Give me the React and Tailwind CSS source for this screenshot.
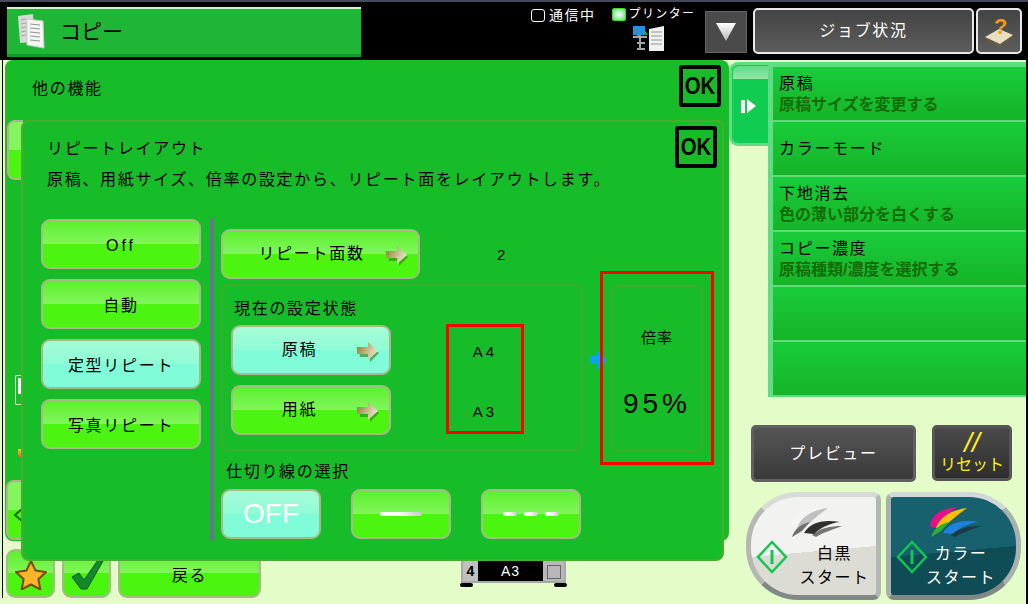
const FONT = { fontFamily: '"Liberation Sans", "Noto Sans CJK JP", sans-serif' };

// アイコン類
function Arrow() {
  return (
    <svg width="24" height="22" viewBox="0 0 24 22" className="mt-[3px] shrink-0">
      <defs>
        <linearGradient id="ar" x1="0" y1="0" x2="1" y2="0.4">
          <stop offset="0" stopColor="#8f7c2c" />
          <stop offset="1" stopColor="#e8e2c8" />
        </linearGradient>
      </defs>
      <path d="M2 8h10V3l10 8-9 9v-5H3z" fill="#2f7a10" opacity="0.6" transform="translate(1 1)" />
      <path d="M1 6h11V1l10 9-10 9v-6H1z" fill="url(#ar)" />
    </svg>
  );
}

function GreenButton({ active, className = "", children }) {
  const bg = active
    ? "bg-[linear-gradient(#a6fcd8_0,#8ffcd5_50%,#80fcd8_50%,#80fcd8_100%)]"
    : "bg-[linear-gradient(#5cf02c_0,#82f65c_50%,#4cf510_50%,#4cf510_100%)]";
  return (
    <div
      className={`flex items-center justify-center rounded-[9px] border-2 border-[#a8b888] text-black ${bg} ${className}`}
    >
      {children}
    </div>
  );
}

function OkBox({ className = "" }) {
  return (
    <div
      className={`flex h-[42px] w-[42px] items-center justify-center rounded-[3px] border-[4px] border-black text-[24px] font-bold text-black ${className}`}
    >
      <span className="inline-block scale-x-[0.85]">OK</span>
    </div>
  );
}

function Separator({ dashed }) {
  const bar = "h-[4px] rounded-[2px] bg-[linear-gradient(90deg,#fff_40%,#c8c8c8)]";
  if (dashed) {
    return (
      <div className="flex gap-[7px]">
        <div className={`w-[14px] ${bar}`} />
        <div className={`w-[14px] ${bar}`} />
        <div className={`w-[14px] ${bar}`} />
      </div>
    );
  }
  return <div className={`w-[42px] ${bar}`} />;
}

function Header() {
  return (
    <div className="flex h-[60px] shrink-0 border-t-[2px] border-[#454a58] bg-black">
      <div className="ml-[7px] mt-[5px] flex h-[50px] w-[354px] items-center border-t-[2px] border-b-[3px] border-t-[#cdf5d0] border-b-[#149a2c] bg-[#1fb535] pl-[10px]">
        <svg width="30" height="38" viewBox="0 0 30 38">
          <path d="M1 3l15-2 2 28-15 1z" fill="#d6d8d4" />
          <path d="M10 6l16 2 1 27-17-3z" fill="#f4f6f4" stroke="#c8ccc8" />
          <path d="M13 11l10 1M13 15l10 1M13 19l10 1M13 23l10 1M13 27l10 1" stroke="#909890" />
          <path d="M4 7l5-1M4 11l5-1M4 15l5-1M4 19l5-1M4 23l5-1" stroke="#a0a8a0" />
        </svg>
        <span className="ml-[13px] text-[21px] text-black">コピー</span>
      </div>
      <div className="ml-[170px] flex w-[174px] pt-[5px] text-white">
        <div className="flex h-[16px] items-center">
          <div className="h-[13px] w-[14px] rounded-[3px] border border-white" />
          <span className="ml-[4px] text-[14px] tracking-[1.5px]">通信中</span>
        </div>
        <div className="ml-[16px] flex flex-col">
          <div className="flex h-[14px] items-center">
            <div className="h-[13px] w-[14px] rounded-[2px] border border-[#40e020] bg-[radial-gradient(#fff,#50e060)]" />
            <span className="ml-[3px] whitespace-nowrap text-[12px] leading-none tracking-[1.4px]">プリンター</span>
          </div>
          <svg width="34" height="28" viewBox="0 0 34 28" className="ml-[20px] mt-[3px]">
            <rect x="1" y="2" width="12" height="9" fill="#2090e8" />
            <rect x="5" y="11" width="4" height="2" fill="#808890" />
            <path d="M1 13h14M8 13v12M5 19h8M5 25h8" stroke="#a0a8a8" strokeWidth="2" />
            <path d="M12 7l3 4" stroke="#20c040" strokeWidth="2" />
            <path d="M17 5l15-3v25H17z" fill="#f0f2f0" />
            <path d="M19 8h11M19 12h11M19 16h11M19 20h11" stroke="#909898" />
          </svg>
        </div>
      </div>
      <div className="mt-[9px] flex h-[42px] w-[42px] items-center justify-center border border-[#666] bg-[#4a4a4a]">
        <svg width="22" height="20" viewBox="0 0 22 20">
          <defs>
            <linearGradient id="tri" x1="0" y1="0" x2="0" y2="1">
              <stop offset="0" stopColor="#fff" />
              <stop offset="1" stopColor="#b8b8b8" />
            </linearGradient>
          </defs>
          <path d="M1 1h20L11 19z" fill="url(#tri)" />
        </svg>
      </div>
      <div className="ml-[6px] mt-[6px] flex h-[46px] w-[221px] items-center justify-center rounded-[5px] border-2 border-[#e8e8e8] bg-[linear-gradient(#444,#5c5c5c)] text-[16px] tracking-[1.7px] text-white">
        ジョブ状況
      </div>
      <div className="ml-[2px] mt-[6px] flex h-[46px] w-[46px] items-center justify-center rounded-[5px] border-2 border-[#e8e8e8] bg-[linear-gradient(#444,#5c5c5c)]">
        <svg width="32" height="32" viewBox="0 0 32 32">
          <path d="M3 23l14 7 13-10v2L17 32 3 25z" fill="#6a5c3a" />
          <path d="M2 22l14-8 14 6-13 9z" fill="#e8dfc0" />
          <text x="11" y="19" fontSize="22" fontWeight="700" fill="#f09a18" fontFamily="Liberation Sans">?</text>
        </svg>
      </div>
    </div>
  );
}

function SideRow({ title, sub }) {
  return (
    <div className="flex h-[55px] shrink-0 flex-col justify-center border-b-2 border-[#5fdc78] bg-[linear-gradient(#18cc3a,#16b428)] pl-[6px]">
      {title && <div className="text-[16px] leading-[22px] tracking-[1.7px] text-black">{title}</div>}
      {sub && <div className="text-[16px] font-bold leading-[20px] text-[#126c08]">{sub}</div>}
    </div>
  );
}

function Feather({ mono, className = "" }) {
  const c = mono ? ["#f4f4f4", "#c0c0c0", "#707070", "#303030"] : ["#e8108a", "#f8c000", "#30b030", "#2080e0"];
  return (
    <svg width="56" height="32" viewBox="0 0 56 32" className={`shrink-0 ${className}`}>
      <path d="M3 20C4 9 14 3 30 1c-6 5-14 11-22 21z" fill={c[0]} />
      <path d="M9 22C13 11 24 4 40 2c-8 6-16 12-24 20z" fill={c[1]} />
      <path d="M4 31c2-7 8-13 18-15l-8 9z" fill={c[2]} />
      <path d="M16 27c6-10 18-14 36-11-10 1-20 6-26 12z" fill={c[3]} />
      <path d="M24 29c8-7 18-9 30-9-8 3-20 7-26 11z" fill="#222" opacity="0.6" />
    </svg>
  );
}

function Diamond() {
  return (
    <svg width="32" height="34" viewBox="0 0 32 34" className="absolute left-[5px] top-[43px]">
      <path d="M16 2l14 15-14 15L2 17z" fill="none" stroke="#10c850" strokeWidth="2.5" />
      <path d="M16 10v14" stroke="#10c850" strokeWidth="3" />
    </svg>
  );
}

function RightColumn() {
  return (
    <div className="flex w-[297px] shrink-0 flex-col pt-[2px]">
      <div className="flex">
        <div className="mr-[-2px] flex h-[84px] w-[41px] flex-col rounded-l-[9px] border-[3px] border-r-0 border-[#62dc84] bg-[#10cc50] pt-[1px]">
          <div className="ml-[1px] h-[13px] rounded-tl-[6px] bg-[linear-gradient(#5fdc88,#96e4a8)]" />
          <div className="mt-[20px] flex items-center pl-[9px]">
            <div className="h-[13px] w-[4px] bg-white" />
            <div className="ml-[2px] h-0 w-0 border-y-[7px] border-l-[9px] border-y-transparent border-l-white" />
          </div>
        </div>
        <div className="relative flex h-[335px] w-[258px] flex-col border-l-[5px] border-t-[5px] border-[#62dc84]">
          <SideRow title="原稿" sub="原稿サイズを変更する" />
          <SideRow title="カラーモード" />
          <SideRow title="下地消去" sub="色の薄い部分を白くする" />
          <SideRow title="コピー濃度" sub="原稿種類/濃度を選択する" />
          <SideRow />
          <SideRow />
        </div>
      </div>
      <div className="ml-[22px] mt-[28px] flex gap-[16px]">
        <div className="flex h-[57px] w-[165px] items-center justify-center rounded-[5px] border-[3px] border-[#606060] bg-[linear-gradient(#555,#3a3a3a)] text-[16px] tracking-[1.7px] text-white">
          プレビュー
        </div>
        <div className="flex h-[56px] w-[80px] flex-col items-center justify-center rounded-[5px] border-[3px] border-[#555] bg-[linear-gradient(#4a4a4a,#2e2e2e)] text-[#ffee20]">
          <div className="text-[28px] italic leading-[24px]">//</div>
          <div className="text-[16px] leading-[20px]">リセット</div>
        </div>
      </div>
      <div className="ml-[17px] mt-[10px] flex gap-[5px]">
        <div className="relative flex h-[108px] w-[135px] flex-col items-center rounded-l-[52px] rounded-r-[8px] border-[5px] border-x-[#b4b8b4] border-t-[#d8dcd8] border-b-[#808888] bg-[linear-gradient(175deg,#f2f2f0_55%,#dcdcd4_55%)] pl-[42px] pt-[9px] text-black">
          <Feather mono className="-translate-x-[19px]" />
          <div className="mt-[4px] text-[16px] leading-[24px] tracking-[1.5px]">白黒</div>
          <div className="whitespace-nowrap text-[16px] leading-[24px] tracking-[1.5px]">スタート</div>
          <Diamond />
        </div>
        <div className="relative flex h-[108px] w-[135px] flex-col items-center rounded-l-[8px] rounded-r-[52px] border-[5px] border-x-[#a8b0b0] border-t-[#d0d8d8] border-b-[#808888] bg-[linear-gradient(175deg,#17606e_55%,#0f4c55_55%)] pl-[15px] pt-[9px] text-white">
          <Feather className="-translate-x-[6px]" />
          <div className="mt-[4px] text-[16px] leading-[24px] tracking-[1.5px]">カラー</div>
          <div className="whitespace-nowrap text-[16px] leading-[24px] tracking-[1.5px]">スタート</div>
          <Diamond />
        </div>
      </div>
    </div>
  );
}

function LeftBackPanel() {
  return (
    <div className="relative ml-[3px] h-[481px] w-[724px] rounded-[8px] border-l-2 border-[#3cae2a] bg-[#17bd29]">
      <div className="pl-[25px] pt-[17px] text-[16px] tracking-[1.7px] text-black">他の機能</div>
      <OkBox className="absolute right-[8px] top-[5px]" />
      {/* 背面のボタン端 */}
      <div className="absolute left-[0px] top-[60px] h-[60px] w-[16px] rounded-l-[8px] border-2 border-r-0 border-[#a8b888] bg-[linear-gradient(#82f65c_50%,#4cf510_50%)]" />
      <div className="absolute left-[8px] top-[315px] h-[30px] w-[8px] rounded-l-[2px] border border-r-0 border-[#d0f0d0] pl-[2px] pt-[2px]">
        <div className="h-[16px] w-[3px] bg-white" />
      </div>
      <div className="absolute left-[11px] top-[389px] h-[8px] w-[4px] bg-[linear-gradient(#f8d020,#d86020)]" />
      <div className="absolute bottom-[1px] left-[-1px] flex h-[60px] w-[17px] items-center rounded-l-[8px] border-2 border-r-0 border-[#a8b888] bg-[linear-gradient(#82f65c_50%,#4cf510_50%)] pl-[5px]">
        <svg width="10" height="16" viewBox="0 0 10 16" className="mt-[10px]">
          <path d="M9 2L2 8l7 6" fill="none" stroke="#186a20" strokeWidth="2" />
        </svg>
      </div>
    </div>
  );
}

function Dialog() {
  return (
    <div className="absolute left-[21px] top-[60px] flex h-[441px] w-[703px] flex-col rounded-[8px] border-2 border-[#4aac30] bg-[#17bd29] text-black">
      <OkBox className="absolute right-[5px] top-[4px]" />
      <div className="pl-[24px] pt-[16px] text-[16px] leading-[22px] tracking-[1.7px]">リピートレイアウト</div>
      <div className="whitespace-nowrap pl-[24px] pt-[8px] text-[16px] leading-[24px] tracking-[1.7px]">
        原稿、用紙サイズ、倍率の設定から、リピート面をレイアウトします。
      </div>
      <div className="flex pl-[18px] pt-[27px]">
        <div className="flex w-[160px] flex-col gap-[10px]">
          <GreenButton className="h-[50px] pt-[3px] text-[16px] tracking-[3px]">Off</GreenButton>
          <GreenButton className="h-[50px] pt-[3px] text-[16px] tracking-[1.7px]">自動</GreenButton>
          <GreenButton active className="h-[50px] pt-[3px] text-[16px] tracking-[1.7px]">定型リピート</GreenButton>
          <GreenButton className="h-[50px] pt-[3px] text-[16px] tracking-[1.7px]">写真リピート</GreenButton>
        </div>
        <div className="ml-[9px] mt-[-1px] h-[323px] w-[4px] rounded-[2px] bg-[#66788c]" />
        <div className="ml-[7px] flex w-[500px] flex-col pt-[10px]">
          <div className="flex items-center">
            <GreenButton className="h-[50px] w-[199px] pl-[15px] pr-[9px] text-[16px] tracking-[1.7px]">
              <span className="flex-1 text-center">リピート面数</span>
              <Arrow />
            </GreenButton>
            <span className="ml-[77px] mt-[3px] text-[15px]">2</span>
          </div>
          <div className="mt-[5px] flex items-start">
            <div className="h-[167px] w-[362px] rounded-[8px] border-2 border-[#3cac2c] pl-[8px] pt-[12px]">
              <div className="pl-[3px] text-[16px] leading-[22px] tracking-[1.7px]">現在の設定状態</div>
              <div className="mt-[5px] flex items-start">
                <div className="flex flex-col gap-[10px]">
                  <GreenButton active className="h-[50px] w-[160px] pr-[9px] text-[16px] tracking-[1.7px]">
                    <span className="flex-1 pl-[10px] text-center">原稿</span>
                    <Arrow />
                  </GreenButton>
                  <GreenButton className="h-[50px] w-[160px] pr-[9px] text-[16px] tracking-[1.7px]">
                    <span className="flex-1 pl-[10px] text-center">用紙</span>
                    <Arrow />
                  </GreenButton>
                </div>
                <div className="ml-[55px] mt-[-1px] flex h-[110px] w-[78px] flex-col items-center gap-[40px] border-[3px] border-[#ff0000] pt-[15px] text-[15px] leading-[20px] tracking-[3px]">
                  <span>A4</span>
                  <span>A3</span>
                </div>
              </div>
            </div>
            <div className="relative ml-[17px] mb-[-14px] mt-[-13px]">
              <svg width="20" height="22" viewBox="0 0 20 22" className="absolute left-[-11px] top-[78px]">
                <path d="M1 7h7V1l10 10L8 21v-6H1z" fill="#10a0f0" />
              </svg>
              <div className="relative flex h-[194px] w-[114px] items-center justify-center border-[3px] border-[#ff0000]">
                <div className="flex h-[167px] w-[92px] flex-col items-center rounded-[8px] border-2 border-[#3cac2c] pt-[40px]">
                  <span className="text-[15px] tracking-[1px]">倍率</span>
                  <span className="mt-[34px] text-[28px] tracking-[4px]">95%</span>
                </div>
              </div>
            </div>
          </div>
          <div className="pl-[5px] pt-[9px] text-[16px] leading-[24px] tracking-[1.7px]">仕切り線の選択</div>
          <div className="mt-[5px] flex gap-[30px]">
            <GreenButton active className="h-[50px] w-[100px] text-[28px]">
              <span className="text-white">OFF</span>
            </GreenButton>
            <GreenButton className="h-[50px] w-[100px]"><Separator /></GreenButton>
            <GreenButton className="h-[50px] w-[100px]"><Separator dashed /></GreenButton>
          </div>
        </div>
      </div>
    </div>
  );
}

function BottomBar() {
  return (
    <div className="ml-[4px] mt-[8px] flex items-start gap-[7px]">
      <GreenButton className="h-[49px] w-[49px] items-end pb-[6px]">
        <svg width="32" height="30" viewBox="0 0 32 30">
          <path d="M16 1l4.6 9.6 10.4 1.4-7.6 7.2 1.9 10.3L16 24.5l-9.3 5 1.9-10.3L1 12l10.4-1.4z" fill="#f7b52a" stroke="#7a4a10" strokeWidth="2" />
        </svg>
      </GreenButton>
      <GreenButton className="h-[49px] w-[49px]">
        <svg width="34" height="34" viewBox="0 0 34 34">
          <path d="M2 20l7-4 5 7L28 3l5 1-16 28h-6z" fill="#128a2c" stroke="#0a5a1a" />
        </svg>
      </GreenButton>
      <GreenButton className="h-[49px] w-[143px] pt-[5px] text-[16px] tracking-[1.7px]">戻る</GreenButton>
      <div className="relative ml-[193px] mt-[2px] flex h-[32px] w-[105px] items-stretch border-2 border-[#a8a8a8] bg-black text-[14px] text-white">
        <div className="flex w-[15px] items-end justify-center bg-[#c0c0c0] pb-[1px] font-bold leading-[18px] text-black">4</div>
        <div className="flex flex-1 items-end justify-center pb-[1px] leading-[18px] tracking-[1px]">A3</div>
        <div className="flex w-[21px] items-end justify-center bg-[#b8b8b8] pb-[2px]">
          <div className="h-[14px] w-[14px] border border-[#666]" />
        </div>
        <div className="absolute bottom-[-6px] left-[-3px] h-[4px] w-[13px] rounded-full bg-black" />
        <div className="absolute bottom-[-6px] right-[-3px] h-[4px] w-[13px] rounded-full bg-black" />
      </div>
    </div>
  );
}

export default function App() {
  return (
    <div className="flex h-[604px] w-[1028px] flex-col overflow-hidden bg-[#e3fcc8]" style={FONT}>
      <Header />
      <div className="relative flex flex-1">
        <div className="w-[729px] shrink-0 pl-[2px]">
          <div className="border-l border-black">
            <div className="-ml-[1px]">
              <LeftBackPanel />
              <BottomBar />
            </div>
          </div>
        </div>
        <RightColumn />
        <div className="w-[2px] shrink-0 bg-black" />
        <Dialog />
      </div>
    </div>
  );
}
